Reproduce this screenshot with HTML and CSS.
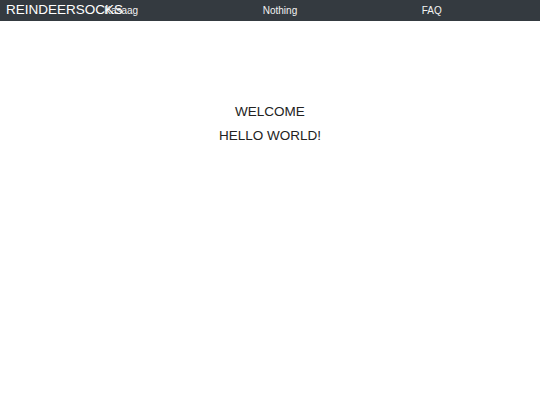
FILE: index.html
```html
<!DOCTYPE html>
<html lang="en">
<head>
    <meta charset="UTF-8">
    <meta name="viewport" content="width=device-width, initial-scale=1.0">
    <title>Reindeersocks</title>
    <link rel="stylesheet" href="styles.css">
</head>
<body>
    <header class="topbar">
        <a href="/" class="logo">REINDEERSOCKS</a>
        <nav class="nav">
            <a href="#">Kasaag</a>
            <a href="#">Nothing</a>
            <a href="#">FAQ</a>
        </nav>
    </header>

    <main class="hero">
        <p>WELCOME</p>
        <p>HELLO WORLD!</p>
    </main>
</body>
</html>
```

FILE: styles.css
```css
* {
    margin: 0;
    padding: 0;
    box-sizing: border-box;
}

body {
    font-family: 'Liberation Sans', Arial, sans-serif;
    background: #fff;
    color: #222;
}

.topbar {
    position: relative;
    height: 21px;
    background: #343a40;
    display: flex;
    align-items: center;
}

.logo {
    position: absolute;
    left: 6px;
    top: 2px;
    font-size: 13.5px;
    line-height: 16px;
    color: #fff;
    text-decoration: none;
}

.nav {
    flex: 1;
    display: flex;
    justify-content: space-around;
    padding: 0 36px 0 42px;
}

.nav a {
    font-size: 10px;
    line-height: 21px;
    color: #f2f2f2;
    text-decoration: none;
}

.hero {
    padding-top: 79px;
    text-align: center;
    font-size: 13.5px;
    line-height: 24px;
}
```
